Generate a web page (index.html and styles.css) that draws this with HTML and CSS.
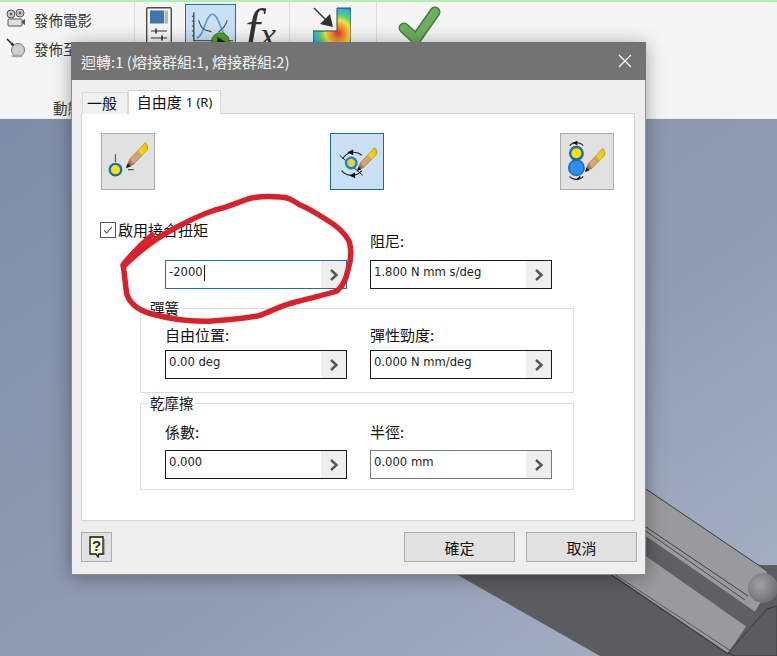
FILE: index.html
```html
<!DOCTYPE html>
<html lang="zh-Hant">
<head>
<meta charset="utf-8">
<title>迴轉</title>
<link rel="stylesheet" href="styles.css">
</head>
<body>
<svg width="0" height="0" class="defs">
  <defs>
    <linearGradient id="pencil" x1="0" y1="1" x2="1" y2="0">
      <stop offset="0" stop-color="#3a2a18"/>
      <stop offset=".14" stop-color="#7a5a3a"/>
      <stop offset=".3" stop-color="#d9a878"/>
      <stop offset=".58" stop-color="#d8a060"/>
      <stop offset=".66" stop-color="#ffd800"/>
      <stop offset="1" stop-color="#f0b400"/>
    </linearGradient>
    <radialGradient id="heat" gradientUnits="userSpaceOnUse" cx="338" cy="33" r="30">
      <stop offset="0" stop-color="#e8303a"/>
      <stop offset=".22" stop-color="#f59030"/>
      <stop offset=".42" stop-color="#f2e040"/>
      <stop offset=".6" stop-color="#58d070"/>
      <stop offset=".8" stop-color="#30b0e8"/>
      <stop offset="1" stop-color="#2a60d0"/>
    </radialGradient>
    <radialGradient id="ball" cx=".4" cy=".4" r=".65">
      <stop offset="0" stop-color="#a4a4a6"/>
      <stop offset="1" stop-color="#6c6c70"/>
    </radialGradient>
    <linearGradient id="sky" x1="0" y1="0" x2="1" y2="1">
      <stop offset="0" stop-color="#7f8da8"/>
      <stop offset=".6" stop-color="#919db3"/>
      <stop offset="1" stop-color="#a8b3c8"/>
    </linearGradient>
    <symbol id="pencil-shape" viewBox="0 0 30 36">
      <path d="M0 34 L5 22 L25 1 Q29 4 28 10 L10 29 Z" fill="url(#pencil)" stroke="#5a4a30" stroke-width=".5"/>
      <path d="M0 34 L2 28 L6 32 Z" fill="#1c1c1c"/>
    </symbol>
  </defs>
</svg>

<div class="app">
  <header class="ribbon">
    <section class="rb-group rb-publish">
      <div class="rb-line">
        <svg class="rb-small" viewBox="0 0 20 20" aria-hidden="true">
          <circle cx="5" cy="5" r="4" fill="#c8c8c8" stroke="#555"/>
          <circle cx="14" cy="4" r="4" fill="#c8c8c8" stroke="#555"/>
          <circle cx="5" cy="5" r="1.300" fill="#555"/>
          <circle cx="14" cy="4" r="1.300" fill="#555"/>
          <rect x="2" y="10" width="14" height="7" rx="1" fill="#e0e0e0" stroke="#555"/>
          <path d="M16 12l3-2v6l-3-2z" fill="#555"/>
        </svg>
        <span>發佈電影</span>
      </div>
      <div class="rb-line rb-line-two">
        <svg class="rb-small" viewBox="0 0 20 20" aria-hidden="true">
          <circle cx="12" cy="12" r="6.500" fill="#cfcfcf" stroke="#777"/>
          <ellipse cx="11" cy="18" rx="6" ry="1.500" fill="#aaa"/>
          <path d="M1 1l6 6" stroke="#222" stroke-width="1.400"/>
          <path d="M8 8l-3.500-1 2.500-2.500z" fill="#222"/>
        </svg>
        <span>發佈至</span>
      </div>
      <div class="rb-label">動態模擬</div>
    </section>
    <section class="rb-group rb-sim">
      <svg class="rb-param" viewBox="0 0 26 36" aria-hidden="true">
        <rect x=".7" y=".7" width="24.600" height="35" rx="1" fill="#f6f6f6" stroke="#4b4b4b" stroke-width="1.400"/>
        <rect x="4" y="3.500" width="14" height="13" fill="#3f74ac"/>
        <rect x="18.500" y="3.500" width="3.500" height="13" fill="#b5b5b5"/>
        <path d="M5 24h16M5 31h16" stroke="#333" stroke-width="1.200"/>
        <path d="M10 21.500v5M16 28.500v5" stroke="#333" stroke-width="1.600"/>
      </svg>
      <div class="rb-plot">
        <svg viewBox="0 0 50 38" aria-hidden="true">
          <path d="M8 4V33H48" fill="none" stroke="#333" stroke-width="1.200"/>
          <path d="M6 8h2M6 13h2M6 18h2M6 23h2M6 28h2" stroke="#333"/>
          <path d="M11 30C18 30 20 6 27 6S36 30 44 30" fill="none" stroke="#5d9ad6" stroke-width="1.600"/>
          <path d="M13 12C16 24 22 22 26 24M42 12C40 20 36 22 33 24" fill="none" stroke="#555" stroke-width="1.200"/>
          <circle cx="35" cy="34" r="9" fill="#5aa018" stroke="#2f6d10"/>
          <path d="M32 29l8 5-8 5z" fill="#123"/>
        </svg>
      </div>
      <div class="rb-fx"><i>f</i><i class="rb-x">x</i></div>
    </section>
    <section class="rb-group rb-contour">
      <svg viewBox="313 7 38 36" aria-hidden="true">
        <path d="M337 8H351V43H313V31H337Z" fill="url(#heat)" stroke="#33415c" stroke-width="1"/>
        <path d="M314 8L330 24" stroke="#333" stroke-width="1.500"/>
        <path d="M333 27L320 24L330 14Z" fill="#333"/>
      </svg>
    </section>
    <section class="rb-group rb-finish">
      <svg viewBox="398 5 44 40" aria-hidden="true">
        <path d="M404 28L416 39L435 12" fill="none" stroke="#44803a" stroke-width="11" stroke-linecap="round" stroke-linejoin="round"/>
        <path d="M404 28L416 39L435 12" fill="none" stroke="#6fae5e" stroke-width="8" stroke-linecap="round" stroke-linejoin="round"/>
      </svg>
    </section>
  </header>

  <svg class="viewport" viewBox="0 119 777 537" aria-hidden="true">
    <rect x="0" y="119" width="777" height="537" fill="url(#sky)"/>
    <path d="M440 565L777 565V656H600Z" fill="#5c5c60"/>
    <path d="M640 484L767 571L762 600L745 628L728 653L600 566Z" fill="#9a9a9c"/>
    <path d="M640 532L757 613L747 627L640 552Z" fill="#606064"/>
    <path d="M640 485L767 571" fill="none" stroke="#3a3f4a"/>
    <path d="M640 523L748 596" fill="none" stroke="#3f3f44"/>
    <path d="M640 527L745 600" fill="none" stroke="#4a4a4e"/>
    <path d="M610 574L728 654" fill="none" stroke="#333"/>
    <path d="M614 574L731 651" fill="none" stroke="#555"/>
    <path d="M728 653L767 609L777 606V656H735Z" fill="#5c5c60" stroke="#3a3a3a"/>
    <circle cx="763" cy="588" r="15" fill="url(#ball)"/>
  </svg>

  <div class="dialog">
    <div class="dlg-title">
      <span>迴轉:1 (熔接群組:1, 熔接群組:2)</span>
      <svg class="dlg-close" viewBox="0 0 14 14" aria-hidden="true"><path d="M1 1L13 13M13 1L1 13" stroke="#fff" stroke-width="1.200"/></svg>
    </div>
    <div class="dlg-body">
      <div class="tabs">
        <div class="tab tab-plain">一般</div>
        <div class="tab tab-active">自由度 <small>1 (R)</small></div>
      </div>
      <div class="panel">
        <div class="tools">
          <button class="tool" type="button" aria-label="平移">
            <svg viewBox="0 0 54 57" aria-hidden="true">
              <path d="M14 21v8M27 37h6" stroke="#555" stroke-width="1.200"/>
              <circle cx="14" cy="37" r="6" fill="#fde400" stroke="#1a6db0" stroke-width="2.400"/>
              <use href="#pencil-shape" x="25" y="8" width="24" height="29"/>
            </svg>
          </button>
          <button class="tool tool-on" type="button" aria-label="旋轉">
            <svg viewBox="0 0 54 57" aria-hidden="true">
              <path d="M9 22L33 43" stroke="#222" stroke-width="1"/>
              <path d="M12 26C16 18 26 17 32 22M11 38C16 44 26 45 32 38" fill="none" stroke="#222" stroke-width="1.200"/>
              <path d="M17 19l6-3v6zM19 43l6-3v6z" fill="#111"/>
              <circle cx="21" cy="30" r="5.500" fill="#d8d840" stroke="#2a7ac0" stroke-width="2.400"/>
              <use href="#pencil-shape" x="27" y="13" width="22" height="27"/>
            </svg>
          </button>
          <button class="tool" type="button" aria-label="圓柱">
            <svg viewBox="0 0 54 57" aria-hidden="true">
              <path d="M9 12C12 8 20 8 23 12M9 44C12 48 20 48 23 44" fill="none" stroke="#222" stroke-width="1.200"/>
              <path d="M12 9l5-2v5zM15 48l5-2v-3z" fill="#111"/>
              <circle cx="16" cy="35" r="8" fill="#2f8cf0" stroke="#1a6db0" stroke-width="1.600"/>
              <circle cx="16" cy="20" r="6.500" fill="#fde400" stroke="#1a6db0" stroke-width="2.600"/>
              <use href="#pencil-shape" x="25" y="14" width="22" height="27"/>
            </svg>
          </button>
        </div>

        <div class="torque">
          <div class="torque-left">
            <label class="check">
              <span class="check-box">
                <svg viewBox="0 0 16 16" aria-hidden="true"><path d="M3.500 8.500L6.500 11.500L12.500 4.500" fill="none" stroke="#555" stroke-width="1.200"/></svg>
              </span>
              <span>啟用接合扭矩</span>
            </label>
            <div class="input input-focus">
              <span class="input-val">-2000<span class="caret"></span></span>
              <span class="input-arrow"><svg viewBox="0 0 10 14" aria-hidden="true"><path d="M2 2L7.500 7L2 12" fill="none" stroke="#555" stroke-width="2.400"/></svg></span>
            </div>
          </div>
          <div class="field">
            <div class="field-label">阻尼:</div>
            <div class="input">
              <span class="input-val">1.800 N mm s/deg</span>
              <span class="input-arrow"><svg viewBox="0 0 10 14" aria-hidden="true"><path d="M2 2L7.500 7L2 12" fill="none" stroke="#555" stroke-width="2.400"/></svg></span>
            </div>
          </div>
        </div>

        <fieldset class="group group-spring">
          <legend>彈簧</legend>
          <div class="field">
            <div class="field-label">自由位置:</div>
            <div class="input">
              <span class="input-val">0.00 deg</span>
              <span class="input-arrow"><svg viewBox="0 0 10 14" aria-hidden="true"><path d="M2 2L7.500 7L2 12" fill="none" stroke="#555" stroke-width="2.400"/></svg></span>
            </div>
          </div>
          <div class="field">
            <div class="field-label">彈性勁度:</div>
            <div class="input">
              <span class="input-val">0.000 N mm/deg</span>
              <span class="input-arrow"><svg viewBox="0 0 10 14" aria-hidden="true"><path d="M2 2L7.500 7L2 12" fill="none" stroke="#555" stroke-width="2.400"/></svg></span>
            </div>
          </div>
        </fieldset>

        <fieldset class="group group-friction">
          <legend>乾摩擦</legend>
          <div class="field">
            <div class="field-label">係數:</div>
            <div class="input">
              <span class="input-val">0.000</span>
              <span class="input-arrow"><svg viewBox="0 0 10 14" aria-hidden="true"><path d="M2 2L7.500 7L2 12" fill="none" stroke="#555" stroke-width="2.400"/></svg></span>
            </div>
          </div>
          <div class="field">
            <div class="field-label">半徑:</div>
            <div class="input input-muted">
              <span class="input-val">0.000 mm</span>
              <span class="input-arrow"><svg viewBox="0 0 10 14" aria-hidden="true"><path d="M2 2L7.500 7L2 12" fill="none" stroke="#555" stroke-width="2.400"/></svg></span>
            </div>
          </div>
        </fieldset>
      </div>

      <div class="footer">
        <button class="btn btn-help" type="button" aria-label="說明">
          <svg viewBox="0 0 16 22" aria-hidden="true">
            <path d="M1 1H14V18H10L9 21L7 18H1Z" fill="#fdfdc8" stroke="#111" stroke-width="1.300"/>
            <path d="M14.800 3V19" stroke="#555" stroke-width="1.200"/>
            <text x="7.500" y="15" class="help-q">?</text>
          </svg>
        </button>
        <div class="footer-actions">
          <button class="btn" type="button">確定</button>
          <button class="btn" type="button">取消</button>
        </div>
      </div>
    </div>
  </div>

  <svg class="scribble" viewBox="0 0 777 656" aria-hidden="true">
    <path d="M152 235C140 245 130 256 123 265C125 275 125 285 127 295C131 305 140 311 152 314C170 319 190 322 212 321C232 320 245 318 258 316C272 311 280 306 292 303C310 298 325 295 337 291C344 285 346 278 348 270C351 260 352 250 349 241C344 232 337 226 327 220C316 213 308 208 300 205C292 200 288 197 280 197C268 196 258 196 248 199C236 203 228 207 215 210C200 215 190 220 175 228C160 236 140 250 124 266" fill="none" stroke="#d9212b" stroke-width="5.500" stroke-linecap="round" stroke-linejoin="round"/>
  </svg>
</div>
</body>
</html>
```

FILE: styles.css
```css
* { box-sizing: border-box; }
html, body { margin: 0; padding: 0; }
body {
  width: 777px;
  height: 656px;
  overflow: hidden;
  background: #f5f5f5;
  font-family: "Noto Sans CJK TC", "Noto Sans", sans-serif;
  color: #111;
}
.defs { display: block; height: 0; position: absolute; }
.app { position: relative; width: 777px; height: 656px; display: flex; flex-direction: column; }

/* ribbon */
.ribbon {
  height: 119px;
  flex: none;
  display: flex;
  background: #f5f5f5;
  border-top: 2px solid #b4eeb0;
  border-bottom: 1px solid #e9ecf0;
}
.rb-group { border-right: 1px solid #dcdcdc; height: 100%; flex: none; }
.rb-publish { width: 135px; padding: 7px 0 0 6px; display: flex; flex-direction: column; font-size: 14.5px; color: #333; }
.rb-line { display: flex; align-items: center; gap: 8px; height: 20px; }
.rb-line-two { margin-top: 9px; }
.rb-small { width: 20px; height: 20px; flex: none; }
.rb-label { margin-top: auto; margin-bottom: 1px; padding-left: 47px; font-size: 14.5px; line-height: 18px; color: #333; }
.rb-sim { width: 155px; padding: 5px 0 0 11px; display: flex; align-items: flex-start; position: relative; }
.rb-param { width: 26px; height: 36px; flex: none; margin-right: 13px; }
.rb-plot { width: 51px; height: 46px; flex: none; margin-top: -3px; background: #c9e0f5; border: 1px solid #1b70b5; }
.rb-plot svg { display: block; width: 49px; height: 44px; }
.rb-fx { font-family: "Liberation Serif", serif; font-size: 54px; line-height: 44px; color: #333; margin-left: 9px; white-space: nowrap; }
.rb-x { font-size: 36px; }
.rb-contour { width: 87px; padding: 5px 0 0 23px; }
.rb-contour svg { width: 38px; height: 36px; display: block; }
.rb-finish { border-right: 0; padding: 3px 0 0 21px; }
.rb-finish svg { width: 44px; height: 40px; display: block; }

/* 3D view */
.viewport { display: block; flex: 1; width: 777px; height: 537px; }

/* dialog */
.dialog {
  position: absolute;
  left: 71px;
  top: 42px;
  width: 575px;
  height: 533px;
  display: flex;
  flex-direction: column;
  background: #eeeeee;
  border: 1px solid #8c8c8c;
  border-top: 0;
  box-shadow: 0 2px 18px rgba(0, 0, 0, .34);
}
.dlg-title {
  height: 38px;
  flex: none;
  margin: 0 -1px;
  padding: 0 14px 0 10px;
  display: flex;
  align-items: center;
  justify-content: space-between;
  background: #737373;
  color: #f2f2f2;
  font-size: 15px;
}
.dlg-close { width: 14px; height: 14px; flex: none; }
.dlg-body { flex: 1; display: flex; flex-direction: column; padding: 10px 10px 0 9px; min-height: 0; }

.tabs { display: flex; align-items: flex-end; height: 24px; flex: none; padding-left: 1px; position: relative; z-index: 1; margin-bottom: -1px; }
.tab {
  width: 46px;
  height: 22px;
  display: flex;
  align-items: center;
  justify-content: center;
  font-size: 15px;
  background: #f0f0f0;
  border: 1px solid #d9d9d9;
  border-bottom: 0;
}
.tab-plain { padding: 0 6px 2px 0; }
.tab-active { width: 93px; height: 24px; background: #fff; padding-bottom: 2px; }
.tab small { font-family: "Noto Sans", sans-serif; font-size: 13px; margin-left: 4px; }

.panel {
  height: 408px;
  flex: none;
  background: #fff;
  border: 1px solid #d2d2d2;
  padding: 19px 20px 0 19px;
}
.tools { display: flex; justify-content: space-between; }
.tool { width: 54px; height: 57px; padding: 0; background: #e1e1e1; border: 1px solid #adadad; }
.tool svg { display: block; width: 52px; height: 55px; }
.tool-on { background: #c9e0f5; border-color: #1a6aa5; margin-left: -1px; }

.torque { display: grid; grid-template-columns: 269px 182px; margin-top: 32px; height: 67px; }
.torque-left { display: flex; flex-direction: column; justify-content: space-between; }
.check { display: flex; align-items: center; gap: 2px; font-size: 15px; line-height: 16px; margin-left: -1px; }
.check-box { width: 16px; height: 16px; border: 1px solid #555; background: #fff; flex: none; }
.check-box svg { display: block; width: 14px; height: 14px; }
.torque-left .input { margin-left: 64px; }
.torque > .field { align-self: end; }

.field { display: flex; flex-direction: column; }
.field-label { font-size: 15px; line-height: 16px; margin-bottom: 11px; }

.input {
  width: 182px;
  height: 29px;
  display: flex;
  justify-content: space-between;
  background: #fff;
  border: 1px solid #1a1a1a;
}
.input-focus { border-color: #1f6fae; }
.input-muted { border-color: #7a7a7a; }
.input-val { padding: 4px 0 0 3px; font-family: "DejaVu Sans", sans-serif; font-size: 11.6px; line-height: 15px; color: #222; white-space: nowrap; display: flex; }
.input-arrow { width: 25px; background: #eeeeee; display: flex; align-items: center; justify-content: center; }
.input-arrow svg { width: 10px; height: 14px; display: block; }
.caret { width: 1px; height: 16px; margin-left: 1px; background: #111; }

.group {
  margin: 0 0 0 39px;
  padding: 0 0 0 24px;
  width: 434px;
  border: 1px solid #dcdcdc;
  display: grid;
  grid-template-columns: 182px 182px;
  column-gap: 23px;
  min-width: 0;
}
.group legend { font-size: 14.5px; line-height: 14px; padding: 0 2px; margin-left: -17px; color: #111; }
.group-spring { margin-top: 12px; height: 92px; padding-top: 12px; }
.group-spring .field-label { margin-bottom: 7px; }
.group-friction { margin-top: 3px; height: 94px; padding-top: 14px; }
.group-friction .field-label { margin-bottom: 10px; }

.footer { display: flex; justify-content: space-between; align-items: flex-start; padding-top: 11px; margin-right: -2px; }
.footer-actions { display: flex; gap: 11px; }
.btn {
  width: 111px;
  height: 30px;
  padding: 0;
  background: #e1e1e1;
  border: 1px solid #adadad;
  font-family: "Noto Sans CJK TC", sans-serif;
  font-size: 15px;
  color: #111;
}
.btn-help { width: 31px; display: flex; align-items: center; justify-content: center; }
.btn-help svg { width: 16px; height: 22px; display: block; }
.help-q { font-family: "Liberation Sans", sans-serif; font-weight: 700; font-size: 15px; text-anchor: middle; fill: #22226a; }

/* marker annotation */
.scribble { position: absolute; left: 0; top: 0; width: 777px; height: 656px; pointer-events: none; }
```
